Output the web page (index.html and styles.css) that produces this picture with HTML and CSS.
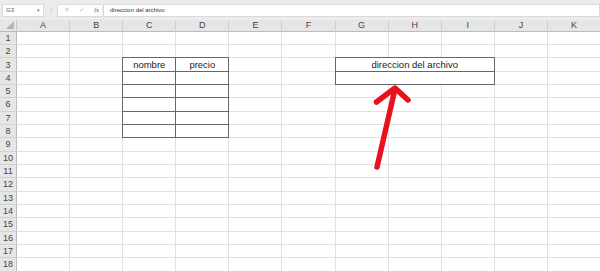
FILE: index.html
```html
<!DOCTYPE html>
<html lang="es">
<head>
    <meta charset="UTF-8">
    <title>Hoja</title>
    <link rel="stylesheet" href="styles.css">
</head>
<body>
<div class="window">
    <div class="formula-bar">
        <div class="name-box">
            <span>G3</span>
            <span class="drop">&#9662;</span>
        </div>
        <span class="grip">&#8942;</span>
        <div class="fx-tools">
            <span>&#10005;</span>
            <span>&#10003;</span>
            <span class="fx"><i>f</i>x</span>
        </div>
        <div class="formula-input">direccion del archivo</div>
    </div>
    <div class="sheet" id="sheet"></div>
    <svg class="arrow" width="600" height="271" viewBox="0 0 600 271">
        <path d="M377 167 L395 89" />
        <path d="M376.5 102 L395 88 L408 100" />
    </svg>
</div>
<script>
    const sheet = document.getElementById('sheet');
    const cols = ['A', 'B', 'C', 'D', 'E', 'F', 'G', 'H', 'I', 'J', 'K'];

    // header row
    const corner = document.createElement('div');
    corner.className = 'corner';
    sheet.appendChild(corner);
    cols.forEach(c => {
        const h = document.createElement('div');
        h.className = 'col-head';
        h.textContent = c;
        sheet.appendChild(h);
    });

    for (let r = 1; r <= 18; r++) {
        const rh = document.createElement('div');
        rh.className = 'row-head';
        rh.textContent = r;
        sheet.appendChild(rh);

        for (let i = 0; i < cols.length; i++) {
            const c = cols[i];
            const cell = document.createElement('div');
            cell.className = 'cell';

            // tabla nombre / precio
            if (r >= 3 && r <= 8 && (c === 'C' || c === 'D')) {
                cell.classList.add('boxed');
                if (r === 3) cell.textContent = c === 'C' ? 'nombre' : 'precio';
            }

            // celda combinada G:I
            if ((r === 3 || r === 4) && c === 'G') {
                cell.classList.add('boxed');
                cell.style.gridColumn = 'span 3';
                if (r === 3) cell.textContent = 'direccion del archivo';
                i += 2;
            }

            sheet.appendChild(cell);
        }
    }
</script>
</body>
</html>
```

FILE: styles.css
```css
* {
    margin: 0;
    padding: 0;
    box-sizing: border-box;
}

body {
    width: 600px;
    height: 271px;
    overflow: hidden;
    background: #fff;
    font-family: "Liberation Sans", Arial, sans-serif;
}

.window {
    position: relative;
    width: 600px;
    height: 271px;
    overflow: hidden;
}

.formula-bar {
    height: 20px;
    display: flex;
    align-items: center;
    padding: 0 0 0 2px;
    background: #ececec;
    font-size: 6px;
    color: #555;
}

.name-box {
    width: 42px;
    height: 13px;
    display: flex;
    align-items: center;
    justify-content: space-between;
    padding: 0 3px;
    background: #fff;
    border: 1px solid #dadada;
}

.name-box .drop {
    font-size: 5px;
    color: #777;
}

.grip {
    width: 13px;
    text-align: center;
    color: #bbb;
    font-size: 8px;
}

.fx-tools {
    width: 45px;
    height: 13px;
    display: flex;
    align-items: center;
    justify-content: space-between;
    padding: 0 3px 0 6px;
    background: #fff;
    border: 1px solid #dadada;
    border-right: none;
    color: #c4c4c4;
    font-size: 7px;
}

.fx-tools .fx {
    color: #666;
    font-size: 6px;
    font-family: "Liberation Serif", serif;
}

.formula-input {
    flex: 1;
    height: 13px;
    display: flex;
    align-items: center;
    padding-left: 6px;
    background: #fff;
    border: 1px solid #dadada;
    margin-left: 1px;
    font-size: 6px;
    color: #333;
}

.sheet {
    display: grid;
    grid-template-columns: 17px repeat(11, 53.1px);
    grid-template-rows: 11.7px repeat(18, 13.333px);
    width: 601px;
}

.corner {
    position: relative;
    background: #e6e6e6;
    border-right: 1px solid #c8c8c8;
    border-bottom: 1px solid #bcbcbc;
}

.corner::after {
    content: "";
    position: absolute;
    right: 2px;
    bottom: 2px;
    border-left: 8px solid transparent;
    border-bottom: 8px solid #b4b4b4;
}

.col-head {
    display: flex;
    align-items: center;
    justify-content: center;
    background: #e6e6e6;
    border-right: 1px solid #cfcfcf;
    border-bottom: 1px solid #bcbcbc;
    font-size: 9px;
    color: #444;
}

.row-head {
    display: flex;
    align-items: center;
    justify-content: center;
    background: #e6e6e6;
    border-right: 1px solid #bcbcbc;
    border-bottom: 1px solid #d2d2d2;
    font-size: 9px;
    color: #444;
}

.cell {
    display: flex;
    align-items: center;
    justify-content: center;
    background: #fff;
    border-right: 1px solid #e1e1e1;
    border-bottom: 1px solid #e1e1e1;
    font-size: 9.5px;
    color: #222;
}

.cell.boxed {
    border-color: #666;
    box-shadow: -1px -1px 0 #666, 0 -1px 0 #666, -1px 0 0 #666;
}

.arrow {
    position: absolute;
    left: 0;
    top: 0;
    pointer-events: none;
}

.arrow path {
    fill: none;
    stroke: #e8121e;
    stroke-width: 5.5;
    stroke-linecap: round;
    stroke-linejoin: round;
}
```
